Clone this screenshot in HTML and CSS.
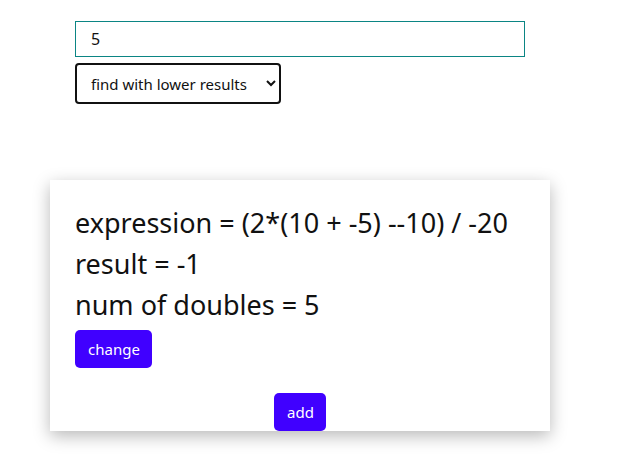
FILE: index.html
```html
<!DOCTYPE html>
<html>
<head>
<meta charset="utf-8">
<link rel="stylesheet" href="styles.css">
</head>
<body>
<div class="page">
  <div class="form">
    <input class="num-input" type="text" value="5">
    <select class="mode">
      <option>find with lower results</option>
    </select>
  </div>
  <div class="card">
    <p class="line">expression = (2*(10 + -5) --10) / -20</p>
    <p class="line">result = -1</p>
    <p class="line">num of doubles = 5</p>
    <button class="btn change">change</button>
    <div class="add-row"><button class="btn add">add</button></div>
  </div>
</div>
</body>
</html>
```
FILE: styles.css
```css
html, body {
  margin: 0;
  padding: 0;
  background: #fff;
}
body {
  font-family: "Noto Sans", "Open Sans", sans-serif;
  color: #111;
}
.page {
  width: 600px;
  padding-bottom: 40px;
}
.form {
  width: 450px;
  margin: 21px auto 0;
  display: flex;
  flex-direction: column;
  align-items: flex-start;
  gap: 6px;
}
.num-input {
  box-sizing: border-box;
  width: 450px;
  height: 36px;
  border: 1px solid #0b8584;
  padding: 0 15px;
  font-family: inherit;
  font-size: 16px;
  color: #111;
  outline: none;
}
.mode {
  box-sizing: border-box;
  width: 206px;
  height: 41px;
  border: 2px solid #111;
  border-radius: 4px;
  padding: 0 8px 0 10px;
  font-family: inherit;
  font-size: 15px;
  color: #111;
  background: #fff;
}
.card {
  box-sizing: border-box;
  width: 500px;
  margin: 76px 0 0 50px;
  padding: 22px 25px 0;
  background: #fff;
  box-shadow: 0 5px 16px rgba(0, 0, 0, 0.28);
}
.line {
  margin: 0;
  font-size: 27px;
  line-height: 41px;
  color: #111;
}
.btn {
  font-family: inherit;
  font-size: 15px;
  color: #fff;
  background: #4000ff;
  border: none;
  border-radius: 5px;
  height: 38px;
  padding: 0 13px;
}
.change {
  margin-top: 5px;
  width: 77px;
}
.add-row {
  display: flex;
  justify-content: center;
  margin-top: 25px;
}
.add {
  width: 52px;
}
```
